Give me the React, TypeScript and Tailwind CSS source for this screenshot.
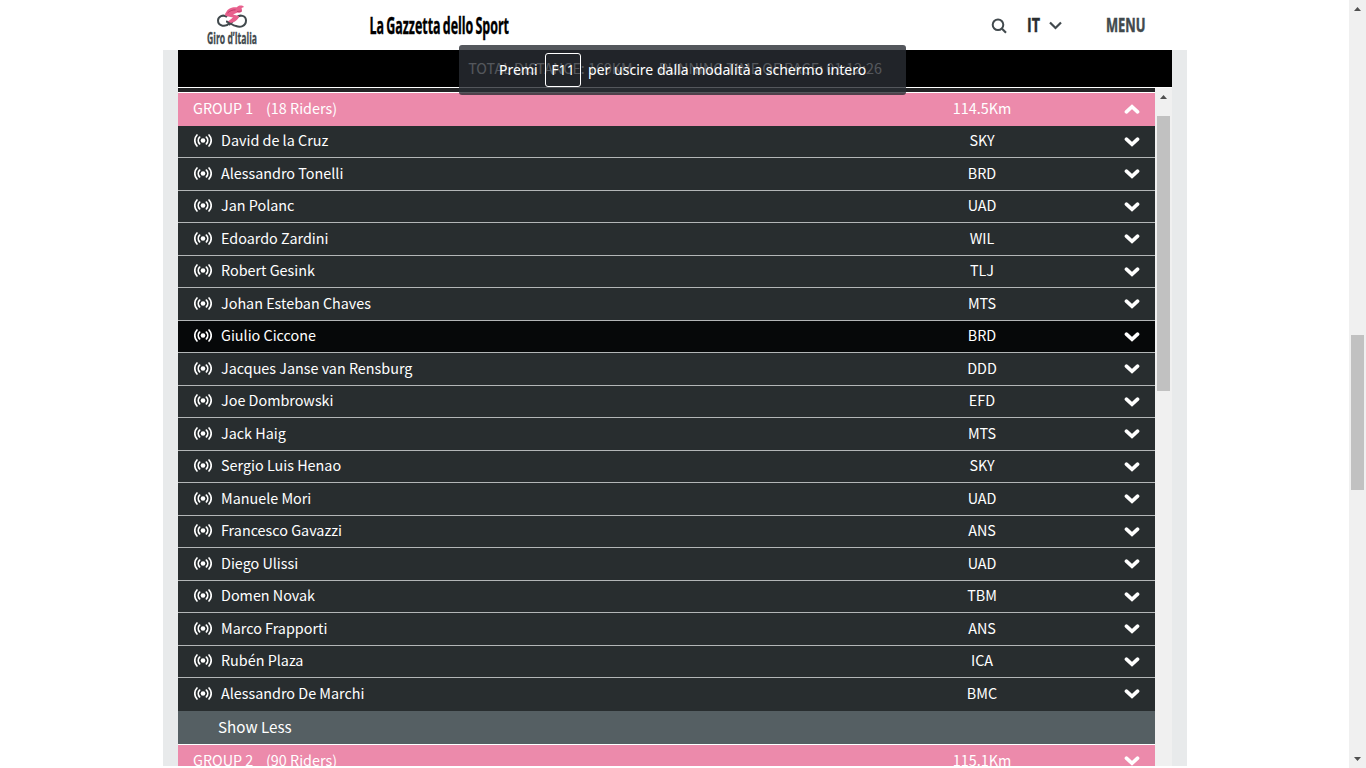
const riders = [
  { name: "David de la Cruz", team: "SKY" },
  { name: "Alessandro Tonelli", team: "BRD" },
  { name: "Jan Polanc", team: "UAD" },
  { name: "Edoardo Zardini", team: "WIL" },
  { name: "Robert Gesink", team: "TLJ" },
  { name: "Johan Esteban Chaves", team: "MTS" },
  { name: "Giulio Ciccone", team: "BRD", active: true },
  { name: "Jacques Janse van Rensburg", team: "DDD" },
  { name: "Joe Dombrowski", team: "EFD" },
  { name: "Jack Haig", team: "MTS" },
  { name: "Sergio Luis Henao", team: "SKY" },
  { name: "Manuele Mori", team: "UAD" },
  { name: "Francesco Gavazzi", team: "ANS" },
  { name: "Diego Ulissi", team: "UAD" },
  { name: "Domen Novak", team: "TBM" },
  { name: "Marco Frapporti", team: "ANS" },
  { name: "Rubén Plaza", team: "ICA" },
  { name: "Alessandro De Marchi", team: "BMC" },
];

function Chevron({ up = false }: { up?: boolean }) {
  return (
    <svg width="16" height="12" viewBox="0 0 16 12" className={up ? "rotate-180" : ""}>
      <path d="M2.400 3.100 8 8.300l5.600-5.200" fill="none" stroke="#fff" strokeWidth="3.600" strokeLinecap="round" />
    </svg>
  );
}

function LiveIcon() {
  return (
    <svg width="18" height="14" viewBox="0 0 18 14" fill="none" stroke="#fff" strokeWidth="1.7" strokeLinecap="round">
      <circle cx="9" cy="6.500" r="2.300" fill="#fff" stroke="none" />
      <path d="M5.600 3.200a4.800 4.800 0 0 0 0 6.600M12.400 3.200a4.800 4.800 0 0 1 0 6.600M3 1a8 8 0 0 0 0 11M15 1a8 8 0 0 1 0 11" />
    </svg>
  );
}

function GiroLogo() {
  return (
    <svg width="52" height="47" viewBox="0 0 52 47" className="overflow-visible">
      <g fill="none" stroke="#41494d" strokeWidth="2">
        <path d="M21 14c-4-3-9-.5-9 3.600 0 6 8 6.500 11 2.900l5-5" />
        <path d="M20 18.500c4 0 6 4.500 10 4.500 4 1.500 10 .5 10-5.400 0-5-6-6.500-9.500-3.100L23 22" />
      </g>
      <path
        d="M20 9.500C22 5 26 3.800 31 4.200c1-2 5.500-2.500 7-.2L35.500 5c1.500 3.500-1 5.600-4 4.600l-4.500 1.900 6 1.500c0 3-4 6-8 7l-3-1.500 5-4-7-1.500c-1.500-1-1-2.500 0-3.500Z"
        fill="#e8608d"
      />
      <path d="M21.500 10c2-2 5-3.200 8-3.200M31 8.500l5-.5" fill="none" stroke="#b83263" strokeWidth=".8" />
      <text
        x="1"
        y="41"
        textLength="50"
        lengthAdjust="spacingAndGlyphs"
        stroke="#41494d"
        strokeWidth=".3"
        className="fill-[#41494d] font-['Open_Sans',sans-serif] text-[16.5px] font-bold"
      >
        Giro d’Italia
      </text>
    </svg>
  );
}

function Header() {
  return (
    <header className="flex h-[50px] bg-white pl-[206px] font-['Open_Sans',sans-serif] text-[#41494d]">
      <div className="w-[162px] pt-[3px]">
        <GiroLogo />
      </div>
      <svg width="144" height="50" viewBox="0 0 144 50">
        <text
          x="1.500"
          y="34"
          textLength="139.500"
          lengthAdjust="spacingAndGlyphs"
          wordSpacing="-2"
          stroke="#000"
          strokeWidth=".4"
          className="fill-black font-['Open_Sans',sans-serif] text-[23px] font-bold"
        >
          La Gazzetta dello Sport
        </text>
      </svg>
      <svg width="18" height="18" viewBox="0 0 18 18" className="mt-[17px] ml-[478px]">
        <circle cx="8" cy="7.700" r="5.300" fill="none" stroke="#41494d" strokeWidth="2" />
        <path d="m12 11.700 4 4" stroke="#41494d" strokeWidth="2.200" />
      </svg>
      <svg width="130" height="50" viewBox="0 0 130 50" className="ml-[17px]" fill="#41494d">
        <text x="2" y="32" textLength="13" lengthAdjust="spacingAndGlyphs" className="fill-[#292d30] text-[19px] font-bold" stroke="#292d30" strokeWidth=".4">
          IT
        </text>
        <path d="m25 22.500 5.500 5.500 5.500-5.500" fill="none" stroke="#41494d" strokeWidth="2.200" />
        <text x="81" y="32" textLength="39.500" lengthAdjust="spacingAndGlyphs" className="text-[19px] font-bold" stroke="#41494d" strokeWidth=".5">
          MENU
        </text>
      </svg>
    </header>
  );
}

function GroupRow({ label, count, km, open = false }: { label: string; count: number; km: string; open?: boolean }) {
  return (
    <div className="flex h-[32.5px] shrink-0 items-center bg-[#ec8aab] pl-[15px]">
      <span className="w-[73px] pb-[3px]">{label}</span>
      <span className="w-[616px] pb-[3px]">({count} Riders)</span>
      <span className="w-[200px] pb-[3px] text-center">{km}</span>
      <span className="ml-[42px]">
        <Chevron up={open} />
      </span>
    </div>
  );
}

function RiderRow({ name, team, active = false }: { name: string; team: string; active?: boolean }) {
  return (
    <div
      className={`flex h-[32.5px] shrink-0 items-center border-b border-[#b3b6b7] pl-4 ${active ? "bg-[#060809]" : "bg-[#282d2f]"}`}
    >
      <span className="w-[27px]">
        <LiveIcon />
      </span>
      <span className="w-[661px] pb-[2px]">{name}</span>
      <span className="w-[200px] pb-[2px] text-center">{team}</span>
      <span className="ml-[42px] pt-px">
        <Chevron />
      </span>
    </div>
  );
}

function Arrow({ down = false }: { down?: boolean }) {
  return (
    <svg width="7" height="4" viewBox="0 0 7 4" className={down ? "rotate-180" : ""}>
      <path d="M0 4 3.500 0 7 4Z" fill="#505050" />
    </svg>
  );
}

function FullscreenToast() {
  return (
    <div className="absolute top-[45px] left-[459px] flex h-[50px] w-[447px] items-center rounded-[3px] bg-[#292d33]/80 pl-10 font-['Noto_Sans',sans-serif] text-[14.05px] whitespace-nowrap text-white">
      <span className="w-[46px]">Premi</span>
      <span className="flex h-[34px] w-9 items-center justify-center rounded-[3px] border border-white">F11</span>
      <span className="ml-[7px]">per uscire dalla modalità a schermo intero</span>
    </div>
  );
}

export default function App() {
  return (
    <div className="relative flex h-screen overflow-hidden bg-white font-['Noto_Sans_CJK_SC',sans-serif] text-[14.36px] leading-5 text-white">
      <div className="flex flex-1 flex-col">
        <Header />
        <main className="ml-[163px] flex h-[716px] w-[1024px] flex-col bg-[#e8eaeb] px-[15px]">
          <div className="flex h-[37px] w-[994px] shrink-0 items-center justify-center gap-[26px] bg-black pb-px text-[14.3px] whitespace-nowrap">
            <span>TOTAL DISTANCE: 169KM</span>
            <span>RUNNING TIME OF RACE: 01:12:26</span>
          </div>
          <div className="flex min-h-0 w-[994px] flex-1 border-t border-white">
            <div className="flex w-[977px] flex-col overflow-hidden">
              <div className="h-[5px] shrink-0 border-b border-white bg-[#222324]" />
              <GroupRow label="GROUP 1" count={18} km="114.5Km" open />
              <div className="shrink-0 *:last:border-transparent">
                {riders.map((rider) => (
                  <RiderRow key={rider.name} {...rider} />
                ))}
              </div>
              <div className="h-[34.5px] shrink-0 border-b border-white bg-[#555f63] pt-[5px] pl-10 text-[15.2px]">
                Show Less
              </div>
              <GroupRow label="GROUP 2" count={90} km="115.1Km" />
            </div>
            <div className="flex w-[17px] flex-col items-center bg-[#f0f0f0] pt-[7px]">
              <Arrow />
              <div className="mt-[17px] h-[275px] w-[13px] bg-[#c1c1c1]" />
            </div>
          </div>
        </main>
      </div>
      <aside className="flex w-[17px] flex-col items-center justify-between bg-[#f0f0f0] pt-[7px] pb-[7px]">
        <Arrow />
        <div className="mt-[57px] h-[155px] w-[13px] bg-[#c1c1c1]" />
        <Arrow down />
      </aside>
      <FullscreenToast />
    </div>
  );
}
